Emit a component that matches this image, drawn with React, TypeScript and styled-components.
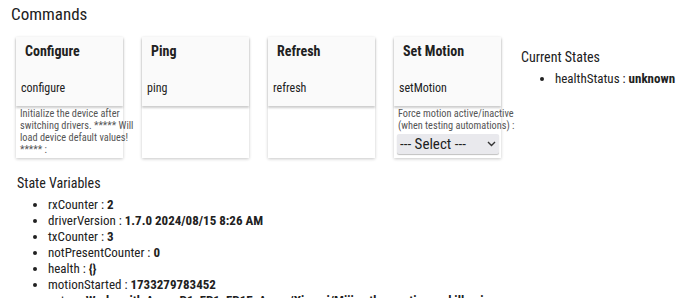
import React from "react";
import styled, { createGlobalStyle } from "styled-components";

const Global = createGlobalStyle`
  html, body { margin: 0; padding: 0; background: #fff; }
  body { font-family: "Roboto Condensed", Roboto, "Noto Sans", Arial, sans-serif; color: #212121; }
`;

const Page = styled.div`
  width: 690px;
  height: 298px;
  overflow: hidden;
  padding: 3px 0 0 11px;
  box-sizing: border-box;
`;

const SectionTitle = styled.div`
  font-size: 17px;
  line-height: 22px;
  color: #212121;
`;

const Top = styled.div`
  display: flex;
  align-items: flex-start;
  margin-top: 12px;
  padding-left: 5px;
`;

const Cards = styled.div`
  display: flex;
  gap: 19px;
`;

const Card = styled.div`
  width: 107px;
  height: 121px;
  background: #fff;
  box-shadow: 0 1px 3px rgba(0, 0, 0, 0.22);
  display: flex;
  flex-direction: column;
`;

const CardHead = styled.div`
  flex-shrink: 0;
  height: 69px;
  background: #fafafa;
  box-shadow: 0 2px 2px rgba(0, 0, 0, 0.2);
  display: flex;
  flex-direction: column;
  justify-content: space-between;
  padding: 5px 0 11px 0;
  box-sizing: border-box;
`;

const CardTitle = styled.div`
  font-size: 14px;
  font-weight: 700;
  line-height: 18px;
  padding-left: 9px;
  color: #212121;
`;

const CmdName = styled.div`
  font-size: 12px;
  line-height: 14px;
  padding-left: 5px;
  color: #212121;
`;

const Desc = styled.div`
  font-size: 10.3px;
  line-height: 12px;
  color: #555;
  padding: 2px 0 0 4px;
  white-space: nowrap;
`;

const Select = styled.div`
  margin: 2px 0 0 3px;
  width: 102px;
  height: 20px;
  flex-shrink: 0;
  background: #e9e9ed;
  border-radius: 2px;
  box-shadow: 0 1px 1px rgba(0, 0, 0, 0.25);
  display: flex;
  align-items: center;
  justify-content: space-between;
  padding: 0 3px 0 3px;
  box-sizing: border-box;
  font-size: 15px;
  color: #212121;
`;

const States = styled.div`
  margin-left: 20px;
  padding-top: 12px;
`;

const SubTitle = styled.div`
  font-size: 14px;
  line-height: 16px;
  color: #212121;
`;

const List = styled.ul<{ $indent: number; $top: number }>`
  margin: ${(p) => p.$top}px 0 0 0;
  padding-left: ${(p) => p.$indent}px;
  font-size: 13px;
  line-height: 16px;
  color: #212121;
`;

const Item = styled.li`
  white-space: nowrap;
`;

const Val = styled.b`
  font-weight: 700;
`;

const Vars = styled.div`
  margin-top: 17px;
  padding-left: 6px;
`;

const Chevron = () => (
  <svg width="9" height="6" viewBox="0 0 9 6">
    <path d="M1 1 L4.5 4.5 L8 1" fill="none" stroke="#333" strokeWidth="1.4" />
  </svg>
);

const cmds: { title: string; name: string; desc?: string[] }[] = [
  {
    title: "Configure",
    name: "configure",
    desc: ["Initialize the device after", "switching drivers. ***** Will", "load device default values!", "***** :"],
  },
  { title: "Ping", name: "ping" },
  { title: "Refresh", name: "refresh" },
];

const vars: [string, string][] = [
  ["rxCounter", "2"],
  ["driverVersion", "1.7.0 2024/08/15 8:26 AM"],
  ["txCounter", "3"],
  ["notPresentCounter", "0"],
  ["health", "{}"],
  ["motionStarted", "1733279783452"],
  ["notes", "Works with Aqara P1, FP1, FP1E, Aqara/Xiaomi/Mijia other motion and illuminance sensors"],
];

const Lines = ({ lines }: { lines: string[] }) => (
  <Desc>
    {lines.map((l, i) => (
      <div key={i}>{l}</div>
    ))}
  </Desc>
);

export default function App() {
  return (
    <Page>
      <Global />
      <SectionTitle>Commands</SectionTitle>
      <Top>
        <Cards>
          {cmds.map((c) => (
            <Card key={c.name}>
              <CardHead>
                <CardTitle>{c.title}</CardTitle>
                <CmdName>{c.name}</CmdName>
              </CardHead>
              {c.desc && <Lines lines={c.desc} />}
            </Card>
          ))}
          <Card>
            <CardHead>
              <CardTitle>Set Motion</CardTitle>
              <CmdName>setMotion</CmdName>
            </CardHead>
            <Lines lines={["Force motion active/inactive", "(when testing automations) :"]} />
            <Select>
              <span>--- Select ---</span>
              <Chevron />
            </Select>
          </Card>
        </Cards>
        <States>
          <SubTitle>Current States</SubTitle>
          <List $indent={34} $top={6}>
            <Item>
              healthStatus : <Val>unknown</Val>
            </Item>
          </List>
        </States>
      </Top>
      <Vars>
        <SubTitle>State Variables</SubTitle>
        <List $indent={31} $top={6}>
          {vars.map(([k, v]) => (
            <Item key={k}>
              {k} : <Val>{v}</Val>
            </Item>
          ))}
        </List>
      </Vars>
    </Page>
  );
}
